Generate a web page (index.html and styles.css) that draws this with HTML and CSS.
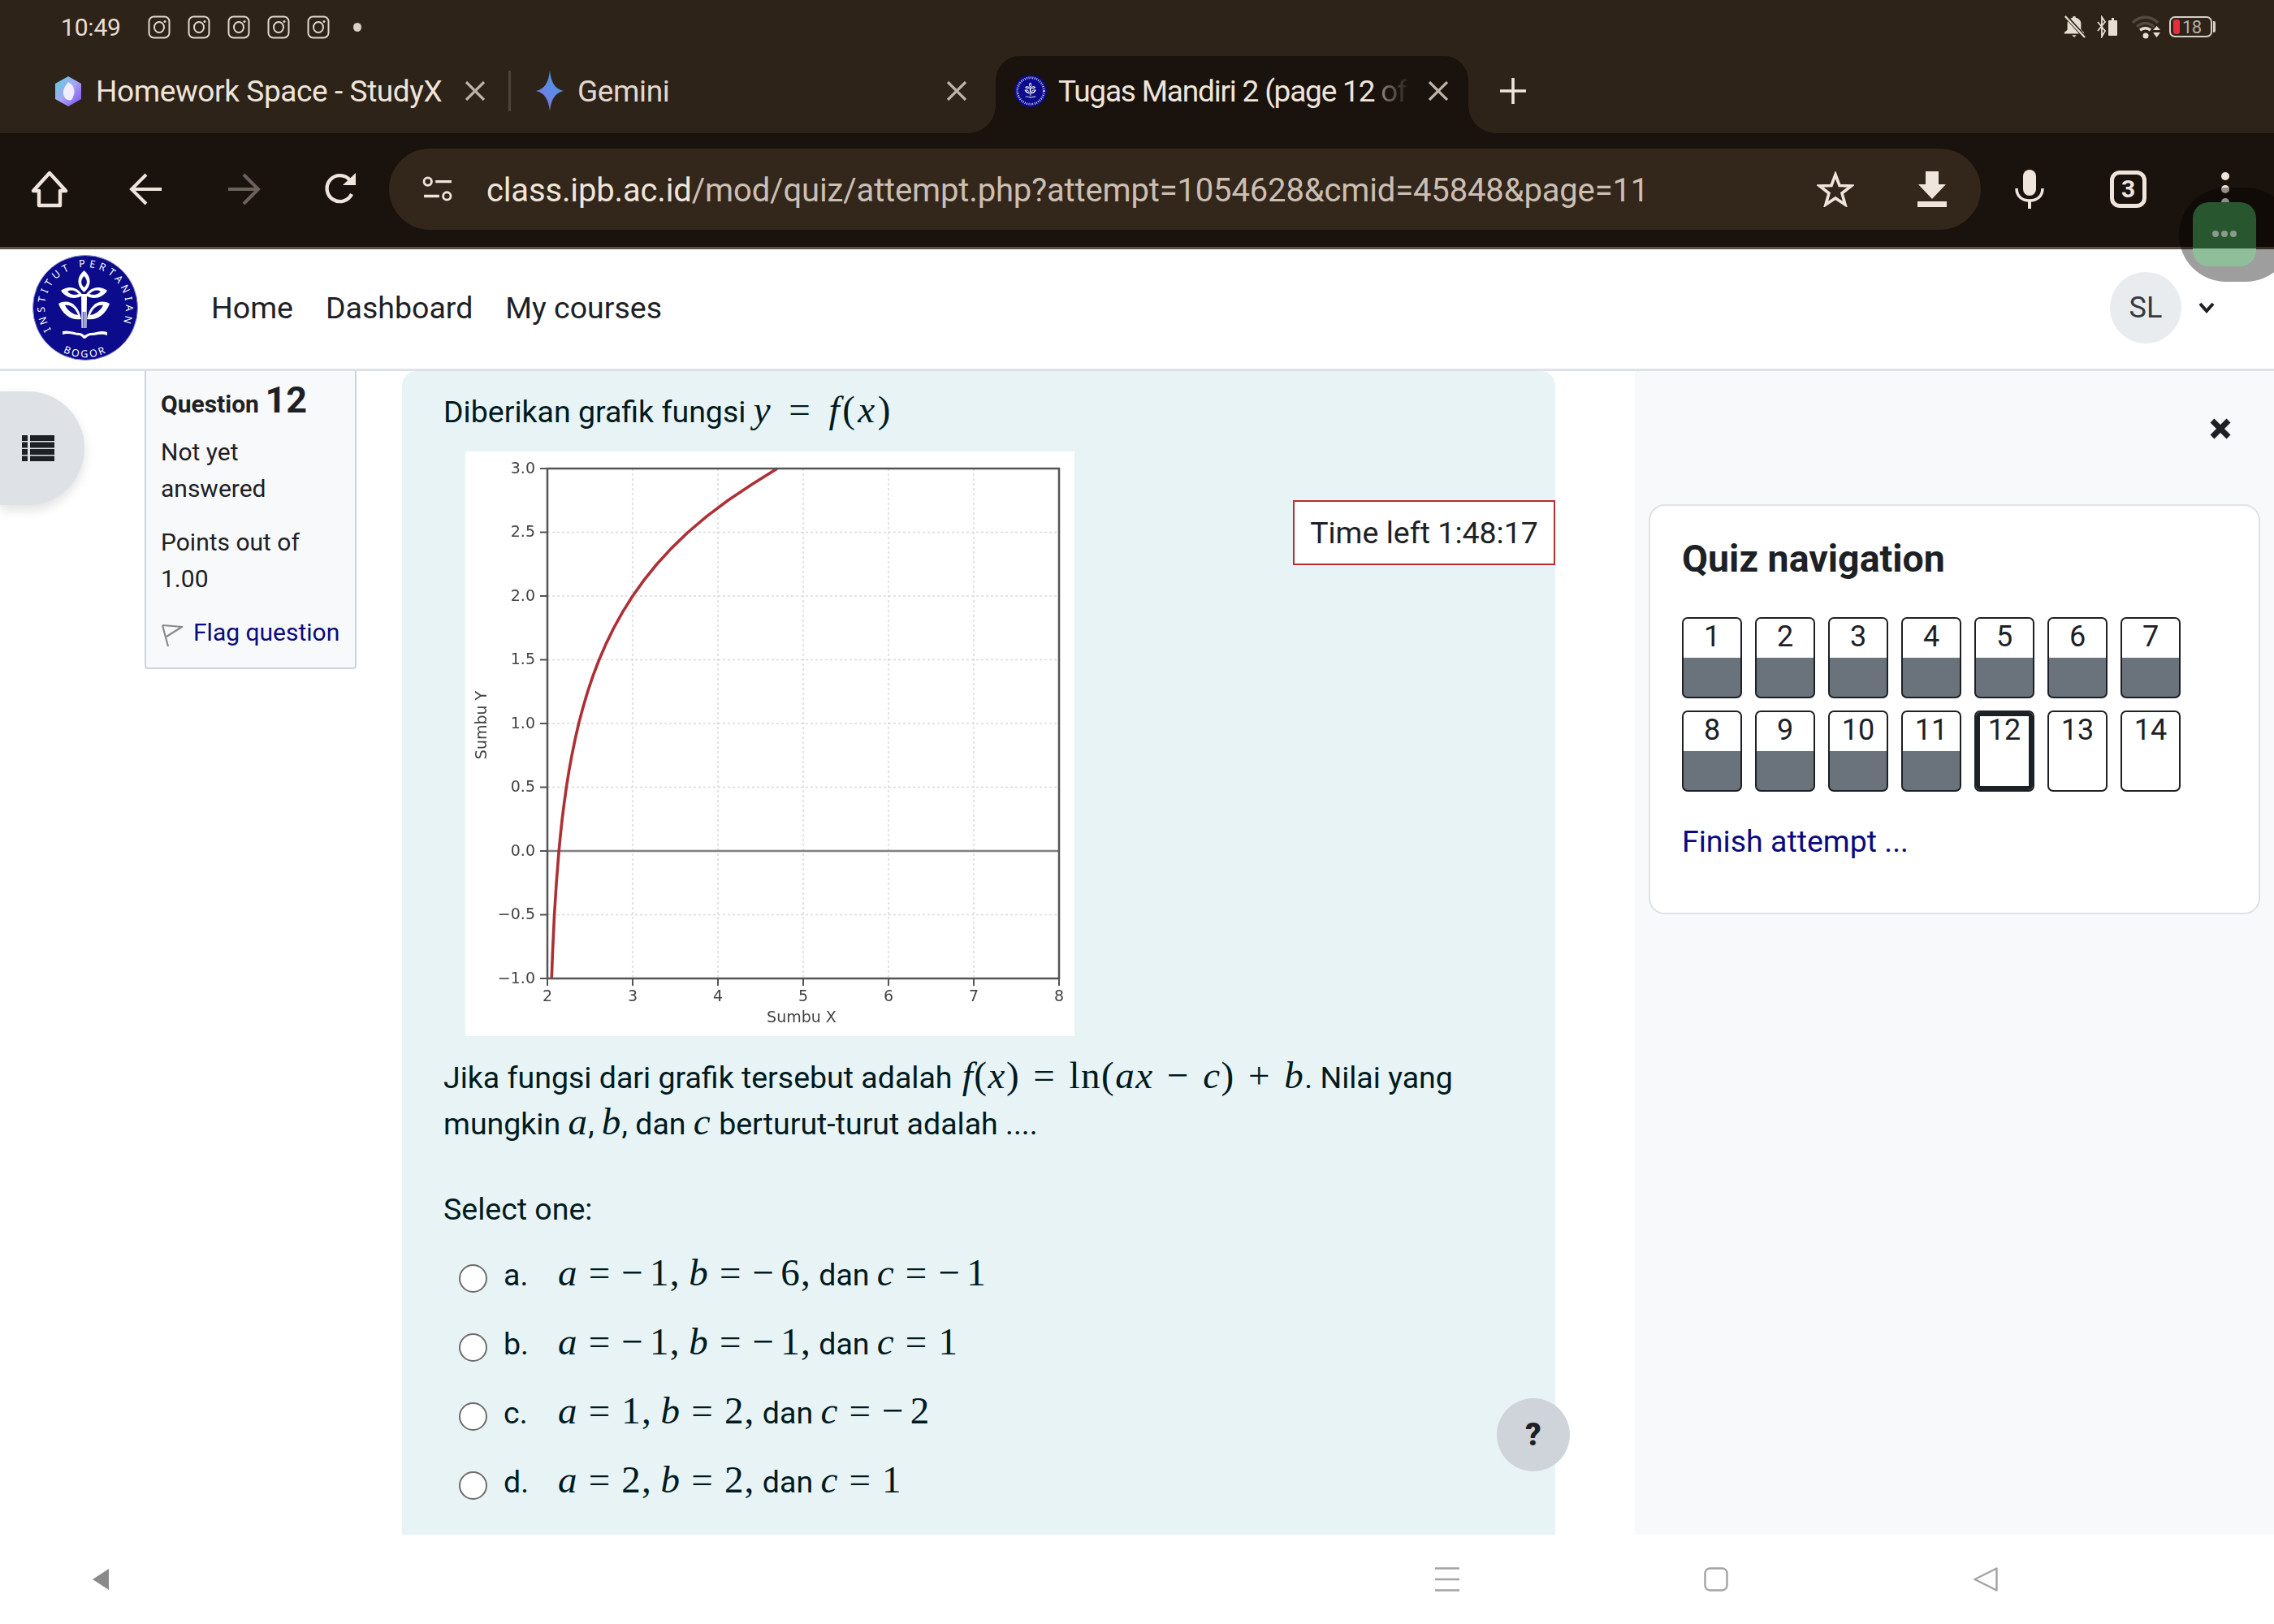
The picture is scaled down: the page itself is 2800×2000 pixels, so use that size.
FILE: index.html
```html
<!DOCTYPE html>
<html lang="en">
<head>
<meta charset="utf-8">
<title>Tugas Mandiri 2</title>
<link rel="stylesheet" href="styles.css">
</head>
<body>
<svg class="defs" width="0" height="0" aria-hidden="true">
  <symbol id="ig" viewBox="0 0 28 29">
    <rect x="1.5" y="1.5" width="25" height="26" rx="6" fill="none" stroke="currentColor" stroke-width="2"/>
    <ellipse cx="14" cy="14.5" rx="6" ry="6.5" fill="none" stroke="currentColor" stroke-width="2"/>
    <circle cx="21" cy="7.5" r="1.5" fill="currentColor"/>
  </symbol>
  <symbol id="x" viewBox="0 0 26 24">
    <path d="M2 1 24 23M24 1 2 23" fill="none" stroke="currentColor" stroke-width="3.2"/>
  </symbol>
  <symbol id="plant" viewBox="0 0 130 130">
    <g fill="#fff">
      <path d="M63.5 19C73 27 73 38 63.5 46 54 38 54 27 63.5 19Z"/>
      <path d="M35 44C44 37 56 39 62 50 52 55 42 54 35 44Z"/>
      <path d="M92 44C83 37 71 39 65 50 75 55 85 54 92 44Z"/>
      <path d="M32 60C43 54 56 59 60 79 47 81 37 73 32 60Z"/>
      <path d="M95 60C84 54 71 59 67 79 80 81 90 73 95 60Z"/>
      <path d="M60 48H67L66.500 90H60.500Z"/>
      <path d="M37 94C45 92 52 96 58 96 61 96 63 99 64 99 66 99 68 96 72 96 78 96 85 92 92 95V99C85 96 78 99 72 99 68 99 66 103 64 103 62 103 60 99 58 99 52 99 45 95 37 98Z"/>
    </g>
    <g fill="#0b0b8c">
      <path d="M63.500 26C68 31 68 36 63.500 40 59 36 59 31 63.500 26Z"/>
      <path d="M43 45C48 42 53 44 57 48 51 50 47 49 43 45Z"/>
      <path d="M84 45C79 42 74 44 70 48 76 50 80 49 84 45Z"/>
      <path d="M40 62C47 61 53 66 56 74 49 73 44 69 40 62Z"/>
      <path d="M87 62C80 61 74 66 71 74 78 73 83 69 87 62Z"/>
      <rect x="61.800" y="70" width="1" height="20"/>
      <rect x="64.300" y="70" width="1" height="20"/>
    </g>
  </symbol>
</svg>

<header class="chrome">
  <div class="strip">
    <div class="status">
      <span class="clock">10:49</span>
      <div class="status-icons">
        <svg class="ig"><use href="#ig"/></svg>
        <svg class="ig"><use href="#ig"/></svg>
        <svg class="ig"><use href="#ig"/></svg>
        <svg class="ig"><use href="#ig"/></svg>
        <svg class="ig"><use href="#ig"/></svg>
        <span class="status-dot"></span>
      </div>
      <div class="status-right">
        <svg class="st-bell" viewBox="0 0 30 30" preserveAspectRatio="none"><path d="M15 1c1.500 0 2 .5 2 2 5 1.500 7 4.500 7 8v8l4 3.500V24H2v-1.500L6 19v-8c0-3.500 2-6.500 7-8 0-1.500.5-2 2-2Z" fill="#e6ddd4"/><path d="M12 26h6l-3 3Z" fill="#e6ddd4"/><path d="M3 0 30 30" stroke="#2e2318" stroke-width="5"/><path d="M3 1 29 29" stroke="#e6ddd4" stroke-width="2.400"/></svg>
        <svg class="st-bt" viewBox="0 0 28 28" preserveAspectRatio="none"><path d="M1 8 10 19 6 26V2l4 6L1 19" fill="none" stroke="#e6ddd4" stroke-width="1.800"/><path d="M15 6h3V3h3v3h3a1 1 0 0 1 1 1v17a1 1 0 0 1-1 1h-9a1 1 0 0 1-1-1V7a1 1 0 0 1 1-1Z" fill="#e6ddd4"/></svg>
        <svg class="st-wifi" viewBox="0 0 38 30" preserveAspectRatio="none"><path d="M2 10C11 1 24 1 33 10" fill="none" stroke="#53493f" stroke-width="3.500"/><path d="M7 15c7-6 14-6 21 0" fill="none" stroke="#53493f" stroke-width="3.500"/><path d="M11 19c5-3 9-3 13 0" fill="none" stroke="#e6ddd4" stroke-width="3.500"/><circle cx="18" cy="26" r="3.500" fill="#e6ddd4"/><path d="m27 19 4.500-5 4.500 5ZM27 22h9l-4.500 6Z" fill="#e6ddd4"/></svg>
        <div class="battery"><span class="battery-level"></span><span class="battery-num">18</span></div>
      </div>
    </div>
    <div class="tabs">
      <div class="tab tab-one">
        <svg class="fav-study" viewBox="0 0 32 37"><defs><linearGradient id="gs" x1="0" x2="1" y1="0" y2="1"><stop offset="0" stop-color="#4fd5d8"/><stop offset=".5" stop-color="#a8a4f5"/><stop offset="1" stop-color="#7a4cf0"/></linearGradient></defs><path d="M16 0 32 9V28L16 37 0 28V9Z" fill="url(#gs)"/><path d="M16 7C24 11 26 20 20 29 14 31 9 25 10 18 11 13 14 10 16 7Z" fill="#f1ecff"/></svg>
        <span class="tab-title">Homework Space - StudyX</span>
        <svg class="tab-x"><use href="#x"/></svg>
      </div>
      <span class="tab-sep"></span>
      <div class="tab tab-two">
        <svg class="fav-gem" viewBox="0 0 34 50" preserveAspectRatio="none"><defs><linearGradient id="gg" x1="0" x2="1" y1="1" y2="0"><stop offset="0" stop-color="#8a6fe0"/><stop offset="1" stop-color="#3aa0e8"/></linearGradient></defs><path d="M17 0C18.500 15 24 23 34 25 24 27 18.500 35 17 50 15.500 35 10 27 0 25 10 23 15.500 15 17 0Z" fill="url(#gg)"/></svg>
        <span class="tab-title tab-dim">Gemini</span>
        <svg class="tab-x"><use href="#x"/></svg>
      </div>
      <div class="tab tab-active">
        <svg class="fav-ipb" viewBox="0 0 130 130"><circle cx="65" cy="65" r="65" fill="#0b0b8c"/><circle cx="65" cy="65" r="53" fill="none" stroke="#dfe0f5" stroke-width="9" stroke-dasharray="3 5"/><use href="#plant" x="17" y="17" width="96" height="96"/></svg>
        <span class="tab-title tab-long">Tugas Mandiri 2 (page 12 <span class="tab-fade">of</span></span>
        <svg class="tab-x"><use href="#x"/></svg>
      </div>
      <svg class="tab-plus" viewBox="0 0 34 34"><path d="M17 1V33M1 17H33" stroke="#efe5dc" stroke-width="3.600" fill="none"/></svg>
    </div>
  </div>
  <div class="toolbar">
    <svg class="tb-home" viewBox="0 0 46 46"><path d="M23 3 43 25H36V43H10V25H3Z" fill="none" stroke="#efe5dc" stroke-width="4.400" stroke-linejoin="round"/></svg>
    <svg class="tb-arrow" viewBox="0 0 42 40"><path d="M40 20H4M21 2 3 20l18 18" fill="none" stroke="#efe5dc" stroke-width="4"/></svg>
    <svg class="tb-arrow tb-off" viewBox="0 0 42 40"><path d="M2 20H38M21 2l18 18-18 18" fill="none" stroke="#6a625b" stroke-width="4"/></svg>
    <svg class="tb-reload" viewBox="0 0 42 42"><path d="M35 27A16 16 0 1 1 33 10" fill="none" stroke="#efe5dc" stroke-width="4.400"/><path d="M24 16H40V1Z" fill="#efe5dc"/></svg>
    <div class="omnibox">
      <svg class="om-tune" viewBox="0 0 40 34"><circle cx="7" cy="7" r="5" fill="none" stroke="#efe5dc" stroke-width="3"/><path d="M17 7H38M2 26H22" stroke="#efe5dc" stroke-width="3.600"/><circle cx="32" cy="26" r="5" fill="none" stroke="#efe5dc" stroke-width="3"/></svg>
      <span class="url"><span class="url-host">class.ipb.ac.id</span>/mod/quiz/attempt.php?attempt=1054628&amp;cmid=45848&amp;page=11</span>
      <svg class="om-star" viewBox="0 0 46 44"><path d="M23 4 28 17.500 42.500 18 31 27 35 41 23 33 11 41 15 27 3.500 18 18 17.500Z" fill="none" stroke="#efe5dc" stroke-width="3.600"/></svg>
      <svg class="om-dl" viewBox="0 0 36 44"><path d="M10 0H26V16H35L18 34 1 16H10ZM0 37H36V44H0Z" fill="#efe5dc"/></svg>
    </div>
    <svg class="tb-mic" viewBox="0 0 36 48"><rect x="10" y="0" width="16" height="32" rx="8" fill="#efe5dc"/><path d="M2 23C2 33 9 38 18 38S34 33 34 23" fill="none" stroke="#efe5dc" stroke-width="3.500"/><path d="M18 38V48" stroke="#efe5dc" stroke-width="4"/></svg>
    <div class="tb-count">3</div>
    <div class="tb-menu"><span></span><span></span><span></span></div>
  </div>
</header>

<div class="float-widget"><div class="float-green"><span></span><span></span><span></span></div></div>

<nav class="topnav">
  <svg class="logo" viewBox="0 0 130 130">
    <circle cx="65" cy="65" r="64.500" fill="#0b0b8c" stroke="#8d8dc9" stroke-width="1"/>
    <defs>
      <path id="arc-top" d="M23 92A50 50 0 1 1 107 92"/>
      <path id="arc-bot" d="M30 115A60 60 0 0 0 100 115"/>
    </defs>
    <text class="logo-text"><textPath href="#arc-top" textLength="204" lengthAdjust="spacing">INSTITUT PERTANIAN</textPath></text>
    <text class="logo-text logo-bot" text-anchor="middle"><textPath href="#arc-bot" startOffset="50%">BOGOR</textPath></text>
    <use href="#plant" width="130" height="130"/>
  </svg>
  <a class="nav-link">Home</a>
  <a class="nav-link">Dashboard</a>
  <a class="nav-link">My courses</a>
  <div class="user">
    <span class="avatar">SL</span>
    <svg class="caret" viewBox="0 0 20 14"><path d="M2 2 10 11 18 2" fill="none" stroke="#1d2125" stroke-width="4"/></svg>
  </div>
</nav>

<main class="page">
  <aside class="side">
    <div class="qinfo">
      <h3 class="qno">Question <span class="qno-num">12</span></h3>
      <p class="qstate">Not yet answered</p>
      <p class="qstate">Points out of 1.00</p>
      <a class="qflag">
        <svg class="flag" viewBox="0 0 27 29"><path d="M2 2 9 28M2 2 26 4 7 16" fill="none" stroke="#8a8a8a" stroke-width="2.200"/></svg>
        Flag question
      </a>
    </div>
  </aside>

  <section class="content">
    <p class="line first">Diberikan grafik fungsi <span class="m m-lead"><i>y</i> = <i>f</i>(<i>x</i>)</span></p>
    <svg class="plot" viewBox="0 0 750 720">
      <rect width="750" height="720" fill="#fff"/>
      <g class="grid">
        <path d="M206 21V649M311 21V649M416 21V649M521 21V649M626 21V649"/>
        <path d="M101 99.500H731M101 178H731M101 256.500H731M101 335H731M101 413.500H731M101 570.500H731"/>
      </g>
      <path class="zero" d="M101 492H731"/>
      <path class="curve" d="M106.200 649 107.400 617.600 109.600 570.500 112.100 531.250 115.200 492 117.100 472.400 119.200 452.750 121.700 433.100 124.400 413.500 127.500 393.900 131.100 374.250 135.100 354.600 139.600 335 144.800 315.400 150.600 295.750 157.200 276.100 164.700 256.500 173.200 236.900 182.800 217.250 193.700 197.600 206 178 220 158.400 235.800 138.750 253.800 119.100 274.100 99.500 297.200 79.900 323.300 60.250 352.900 40.600 384 21"/>
      <rect class="frame" x="101" y="21" width="630" height="628"/>
      <path class="ticks" d="M92 21H101M92 99.500H101M92 178H101M92 256.500H101M92 335H101M92 413.500H101M92 492H101M92 570.500H101M92 649H101M101 649V658M206 649V658M311 649V658M416 649V658M521 649V658M626 649V658M731 649V658"/>
      <g class="ylab">
        <text x="86" y="27">3.0</text><text x="86" y="105">2.5</text><text x="86" y="184">2.0</text><text x="86" y="262">1.5</text><text x="86" y="341">1.0</text><text x="86" y="419">0.5</text><text x="86" y="498">0.0</text><text x="86" y="576">−0.5</text><text x="86" y="655">−1.0</text>
      </g>
      <g class="xlab">
        <text x="101" y="677">2</text><text x="206" y="677">3</text><text x="311" y="677">4</text><text x="416" y="677">5</text><text x="521" y="677">6</text><text x="626" y="677">7</text><text x="731" y="677">8</text>
        <text x="414" y="703">Sumbu X</text>
        <text transform="translate(26 337) rotate(-90)">Sumbu Y</text>
      </g>
    </svg>
    <p class="para">Jika fungsi dari grafik tersebut adalah <span class="m m-para"><i>f</i>(<i>x</i>) = ln(<i>ax</i> − <i>c</i>) + <i>b</i></span>. Nilai yang<br>mungkin <span class="m"><i>a</i></span>, <span class="m"><i>b</i></span>, dan <span class="m"><i>c</i></span> berturut-turut adalah ....</p>
    <p class="prompt">Select one:</p>
    <div class="options">
      <label class="opt"><span class="radio"></span><span class="opt-key">a.</span><span class="opt-val"><span class="m"><i>a</i> = <span class="mn">−</span>1,&#8201;<i>b</i> = <span class="mn">−</span>6,</span> dan <span class="m"><i>c</i> = <span class="mn">−</span>1</span></span></label>
      <label class="opt"><span class="radio"></span><span class="opt-key">b.</span><span class="opt-val"><span class="m"><i>a</i> = <span class="mn">−</span>1,&#8201;<i>b</i> = <span class="mn">−</span>1,</span> dan <span class="m"><i>c</i> = 1</span></span></label>
      <label class="opt"><span class="radio"></span><span class="opt-key">c.</span><span class="opt-val"><span class="m"><i>a</i> = 1,&#8201;<i>b</i> = 2,</span> dan <span class="m"><i>c</i> = <span class="mn">−</span>2</span></span></label>
      <label class="opt"><span class="radio"></span><span class="opt-key">d.</span><span class="opt-val"><span class="m"><i>a</i> = 2,&#8201;<i>b</i> = 2,</span> dan <span class="m"><i>c</i> = 1</span></span></label>
    </div>
    <div class="timer">Time left 1:48:17</div>
    <div class="help">?</div>
  </section>

  <aside class="drawer">
    <div class="drawer-head">
      <svg class="drawer-x" viewBox="0 0 26 26"><path d="M3 3 23 23M23 3 3 23" fill="none" stroke="#1d2125" stroke-width="7"/></svg>
    </div>
    <div class="card">
      <h4 class="card-title">Quiz navigation</h4>
      <div class="qgrid">
        <a class="qb done">1</a><a class="qb done">2</a><a class="qb done">3</a><a class="qb done">4</a><a class="qb done">5</a><a class="qb done">6</a><a class="qb done">7</a>
        <a class="qb done">8</a><a class="qb done">9</a><a class="qb done">10</a><a class="qb done">11</a><a class="qb now">12</a><a class="qb">13</a><a class="qb">14</a>
      </div>
      <a class="finish">Finish attempt ...</a>
    </div>
  </aside>
</main>

<footer class="sysbar">
  <svg class="sys-hint" viewBox="0 0 20 26"><path d="M20 0V26L0 13Z" fill="#8a8a8a"/></svg>
  <svg class="sys-menu" viewBox="0 0 30 30"><path d="M0 1.500H30M0 15H30M0 28.500H30" stroke="#a3a3a3" stroke-width="2.600"/></svg>
  <svg class="sys-home" viewBox="0 0 30 30"><rect x="1.500" y="1.500" width="27" height="27" rx="6" fill="none" stroke="#a3a3a3" stroke-width="2.400"/></svg>
  <svg class="sys-back" viewBox="0 0 30 30"><path d="M28.500 1.500V28.500L1.500 15Z" fill="none" stroke="#a3a3a3" stroke-width="2.400" stroke-linejoin="round"/></svg>
</footer>

<button class="side-toggle" aria-label="Open index">
  <svg viewBox="0 0 40 32"><path d="M0 0H7V7H0ZM10 0H40V7H10ZM0 8.500H7V15.500H0ZM10 8.500H40V15.500H10ZM0 17H7V24H0ZM10 17H40V24H10ZM0 25.500H7V32H0ZM10 25.500H40V32H10Z" fill="#1d2125"/></svg>
</button>
</body>
</html>
```
FILE: styles.css
```css
* { box-sizing: border-box; }
html, body { margin: 0; padding: 0; }
body {
  position: relative;
  width: 2800px;
  height: 2000px;
  overflow: hidden;
  background: #fff;
  color: #1d2125;
  font-family: Roboto, "Noto Sans", sans-serif;
  font-size: 37.500px;
}
p, h3, h4 { margin: 0; }
.defs { position: absolute; }

/* browser chrome */
.chrome { color: #efe5dc; }
.strip { height: 164px; background: #2e2318; }
.status { height: 69px; display: flex; align-items: center; padding: 0 76px 3px 75px; font-size: 30px; }
.clock { width: 107px; color: #e6ddd4; letter-spacing: -.2px; }
.status-icons { display: flex; align-items: center; gap: 21px; color: #e0d7ce; }
.ig { width: 28px; height: 29px; }
.status-dot { width: 10px; height: 11px; border-radius: 50%; background: #d9d2ca; margin-left: 8px; }
.status-right { margin-left: auto; display: flex; align-items: center; gap: 14px; }
.st-bell { width: 28px; height: 28px; }
.st-bt { width: 28px; height: 28px; }
.st-wifi { width: 38px; height: 30px; margin-left: 0; }
.battery {
  position: relative;
  width: 53px;
  height: 26px;
  margin-left: -5px;
  border: 2px solid #d8cfc6;
  border-radius: 7px;
  display: flex;
  align-items: center;
  padding-left: 3px;
  gap: 3px;
}
.battery::after { content: ""; position: absolute; right: -6px; top: 4px; width: 3px; height: 14px; background: #d8cfc6; border-radius: 0 2px 2px 0; }
.battery-level { width: 8px; height: 18px; background: #ea2b3e; border-radius: 3px; }
.battery-num { font-size: 22px; color: #b7aea5; letter-spacing: -.5px; }

.tabs { height: 95px; display: flex; align-items: center; }
.tab { display: flex; align-items: center; height: 95px; padding-bottom: 9px; font-size: 37px; }
.tab-one { width: 626px; padding-left: 68px; padding-right: 28px; }
.tab-two { width: 597px; padding-left: 31px; padding-right: 35px; }
.tab-active {
  position: relative;
  width: 582px;
  padding-left: 23px;
  padding-right: 24px;
  background: #1a120c;
  border-radius: 30px 30px 0 0;
}
.tab-active::before, .tab-active::after { content: ""; position: absolute; bottom: 0; width: 34px; height: 34px; }
.tab-active::before { left: -34px; background: radial-gradient(circle at 0 0, transparent 33.500px, #1a120c 34px); }
.tab-active::after { right: -34px; background: radial-gradient(circle at 100% 0, transparent 33.500px, #1a120c 34px); }
.tab-title { white-space: nowrap; letter-spacing: -.4px; }
.tab-dim { color: #e2d8cf; }
.tab-long { color: #efe5dc; letter-spacing: -1.200px; }
.tab-fade {
  background: linear-gradient(90deg, #8a8179, #2a231d);
  -webkit-background-clip: text;
  background-clip: text;
  color: transparent;
}
.tab-x { width: 26px; height: 24px; margin-left: auto; color: #bdb4aa; }
.tab-sep { width: 3px; height: 50px; margin-top: -10px; background: #4d443a; flex: none; }
.fav-study { width: 32px; height: 37px; margin-right: 18px; flex: none; }
.fav-gem { width: 34px; height: 50px; margin-right: 17px; flex: none; }
.fav-ipb { width: 40px; height: 40px; margin-right: 14px; flex: none; }
.tab-plus { width: 34px; height: 34px; margin-left: 38px; margin-top: -9px; }

.toolbar {
  height: 143px;
  padding: 0 0 3px 38px;
  background: #1a120c;
  border-bottom: 3px solid #5a5045;
  display: flex;
  align-items: center;
}
.tb-home { width: 46px; height: 46px; }
.tb-arrow { width: 42px; height: 40px; margin-left: 75px; }
.tb-off { margin-left: 78px; }
.tb-reload { width: 42px; height: 42px; margin-left: 77px; }
.omnibox {
  width: 1960px;
  height: 100px;
  margin-left: 39px;
  padding: 0 42px 0 40px;
  background: #33261a;
  border-radius: 50px;
  display: flex;
  align-items: center;
}
.om-tune { width: 40px; height: 32px; }
.url { margin-left: 40px; padding-top: 3px; font-size: 40px; letter-spacing: -.15px; color: #cbbfb4; white-space: nowrap; }
.url-host { color: #efe5dc; }
.om-star { width: 46px; height: 44px; margin-left: auto; }
.om-dl { width: 36px; height: 44px; margin-left: 78px; }
.tb-mic { width: 36px; height: 48px; margin-left: 42px; }
.tb-count {
  width: 45px;
  height: 46px;
  margin-left: 81px;
  border: 5px solid #efe5dc;
  border-radius: 12px;
  display: flex;
  align-items: center;
  justify-content: center;
  font-size: 30px;
  font-weight: 700;
  color: #efe5dc;
}
.tb-menu { display: flex; flex-direction: column; gap: 6px; margin-left: 92px; }
.tb-menu span { width: 10px; height: 10px; border-radius: 50%; background: #efe5dc; }

.float-widget {
  position: absolute;
  left: 2683px;
  top: 231px;
  width: 140px;
  height: 116px;
  border-radius: 58px;
  background: rgba(0, 0, 0, .38);
}
.float-green {
  position: absolute;
  left: 17px;
  top: 18px;
  width: 78px;
  height: 79px;
  border-radius: 20px;
  background: linear-gradient(#28572f 57px, #8fbf98 57px);
  display: flex;
  align-items: center;
  justify-content: center;
  gap: 3px;
}
.float-green span { width: 8px; height: 8px; border-radius: 50%; background: #8a9a8c; margin-top: -1px; }

/* site nav */
.topnav {
  height: 150px;
  padding: 0 0 3px 40px;
  border-bottom: 3px solid #dee2e6;
  display: flex;
  align-items: center;
  gap: 40px;
  color: #1d2125;
}
.logo { width: 130px; height: 130px; margin-right: 50px; }
.logo-text { fill: #fff; font-family: "Noto Sans", sans-serif; font-size: 12.500px; }
.logo-bot { letter-spacing: 2.500px; }
.nav-link { color: #1d2125; }
.user { margin-left: auto; display: flex; align-items: center; gap: 21px; padding-right: 73px; }
.avatar {
  width: 88px;
  height: 88px;
  border-radius: 50%;
  background: #e9ecef;
  color: #343a40;
  font-size: 36px;
  display: flex;
  align-items: center;
  justify-content: center;
}
.caret { width: 20px; height: 14px; }

/* page body */
.page { display: flex; height: 1433px; }
.side { width: 495px; padding-left: 178px; flex: none; }
.qinfo {
  width: 261px;
  height: 367px;
  padding: 7px 18px 0 18px;
  background: #f8f9fa;
  border: 2px solid #ced4da;
  border-top: 0;
  border-radius: 0 0 4px 4px;
  font-size: 30px;
  line-height: 45px;
}
.qno { font-size: 30px; font-weight: 700; line-height: 58px; margin-bottom: 7px; }
.qno-num { font-size: 45px; font-weight: 700; }
.qstate { margin-bottom: 21px; }
.qflag { display: flex; align-items: center; gap: 13px; color: #0a0a80; white-space: nowrap; }
.flag { width: 27px; height: 29px; margin-top: 8px; }

.content {
  position: relative;
  width: 1420px;
  flex: none;
  padding: 23px 51px 0;
  background: #e7f3f5;
  border-radius: 18px 18px 0 0;
  color: #001a1e;
  line-height: 54px;
}
.m { font-family: "Liberation Serif", serif; font-size: 47px; letter-spacing: 1.200px; line-height: 0; }
.m i { font-style: italic; }
.m-lead { letter-spacing: 3.500px; word-spacing: 4px; }
.m-para { letter-spacing: 1.500px; word-spacing: 3px; margin-left: 3px; }
.mn { padding-right: 7px; }
.plot { display: block; width: 750px; height: 720px; margin: 22px 0 0 27px; filter: blur(.5px); }
.grid path { stroke: #dadada; stroke-width: 1.500; stroke-dasharray: 3 3; fill: none; }
.zero { stroke: #808080; stroke-width: 2.500; fill: none; }
.curve { stroke: #ac3035; stroke-width: 3.600; fill: none; stroke-linejoin: round; }
.frame { stroke: #555; stroke-width: 2.500; fill: none; }
.ticks { stroke: #555; stroke-width: 2; fill: none; }
.ylab text { font: 19px "DejaVu Sans", sans-serif; fill: #444; text-anchor: end; }
.xlab text { font: 19px "DejaVu Sans", sans-serif; fill: #444; text-anchor: middle; }
.para { margin-top: 23px; line-height: 57px; }
.prompt { margin-top: 49px; }
.options { margin-top: 11px; }
.opt { display: flex; align-items: center; height: 85px; padding-left: 19px; }
.radio { width: 35px; height: 35px; margin-top: 10px; border-radius: 50%; border: 2px solid #6d6d6d; background: #fff; flex: none; }
.opt-key { width: 67px; margin-left: 20px; flex: none; }
.timer {
  position: absolute;
  right: 0;
  top: 159px;
  width: 323px;
  height: 80px;
  background: #fff;
  border: 2px solid #b72f2f;
  display: flex;
  align-items: center;
  justify-content: center;
  color: #1d2125;
}
.help {
  position: absolute;
  left: 1348px;
  top: 1265px;
  width: 90px;
  height: 90px;
  border-radius: 50%;
  background: #ced4da;
  color: #1d2125;
  display: flex;
  align-items: center;
  justify-content: center;
  font-size: 38px;
  font-weight: 900;
}

.drawer { flex: 1; margin-left: 98px; padding: 0 17px; background: #f8f9fa; }
.drawer-head { height: 164px; padding: 58px 36px 0 0; display: flex; justify-content: flex-end; }
.drawer-x { width: 26px; height: 26px; }
.card {
  height: 505px;
  padding: 38px 39px 0;
  background: #fff;
  border: 2px solid #dee2e6;
  border-radius: 20px;
}
.card-title { font-size: 46.500px; font-weight: 700; line-height: 54px; }
.qgrid { display: grid; grid-template-columns: repeat(7, 74px); gap: 15px 16px; margin-top: 45px; }
.qb {
  display: block;
  height: 100px;
  border: 2px solid #1d2125;
  border-radius: 7px;
  background: #fff;
  color: #1d2125;
  font-size: 36px;
  text-align: center;
  line-height: 44px;
}
.qb.done { background: linear-gradient(#fff 48px, #6a737b 48px); }
.qb.now { box-shadow: inset 0 0 0 5px #1d2125; }
.finish { display: block; margin-top: 34px; color: #0a0a80; line-height: 54px; }

/* android nav */
.sysbar { position: relative; height: 110px; display: flex; align-items: center; padding: 0 340px 0 114px; }
.sys-hint { width: 20px; height: 26px; }
.sys-menu, .sys-home, .sys-back { width: 30px; height: 30px; }
.sys-menu { margin-left: 1633px; }
.sys-home { margin-left: 301px; }
.sys-back { margin-left: 302px; }

.side-toggle {
  position: absolute;
  left: 0;
  top: 482px;
  width: 104px;
  height: 140px;
  padding: 0 0 0 27px;
  border: 0;
  border-radius: 0 70px 70px 0;
  background: #dee2e6;
  box-shadow: 0 6px 14px rgba(0, 0, 0, .12);
  display: flex;
  align-items: center;
}
.side-toggle svg { width: 40px; height: 32px; }
```
